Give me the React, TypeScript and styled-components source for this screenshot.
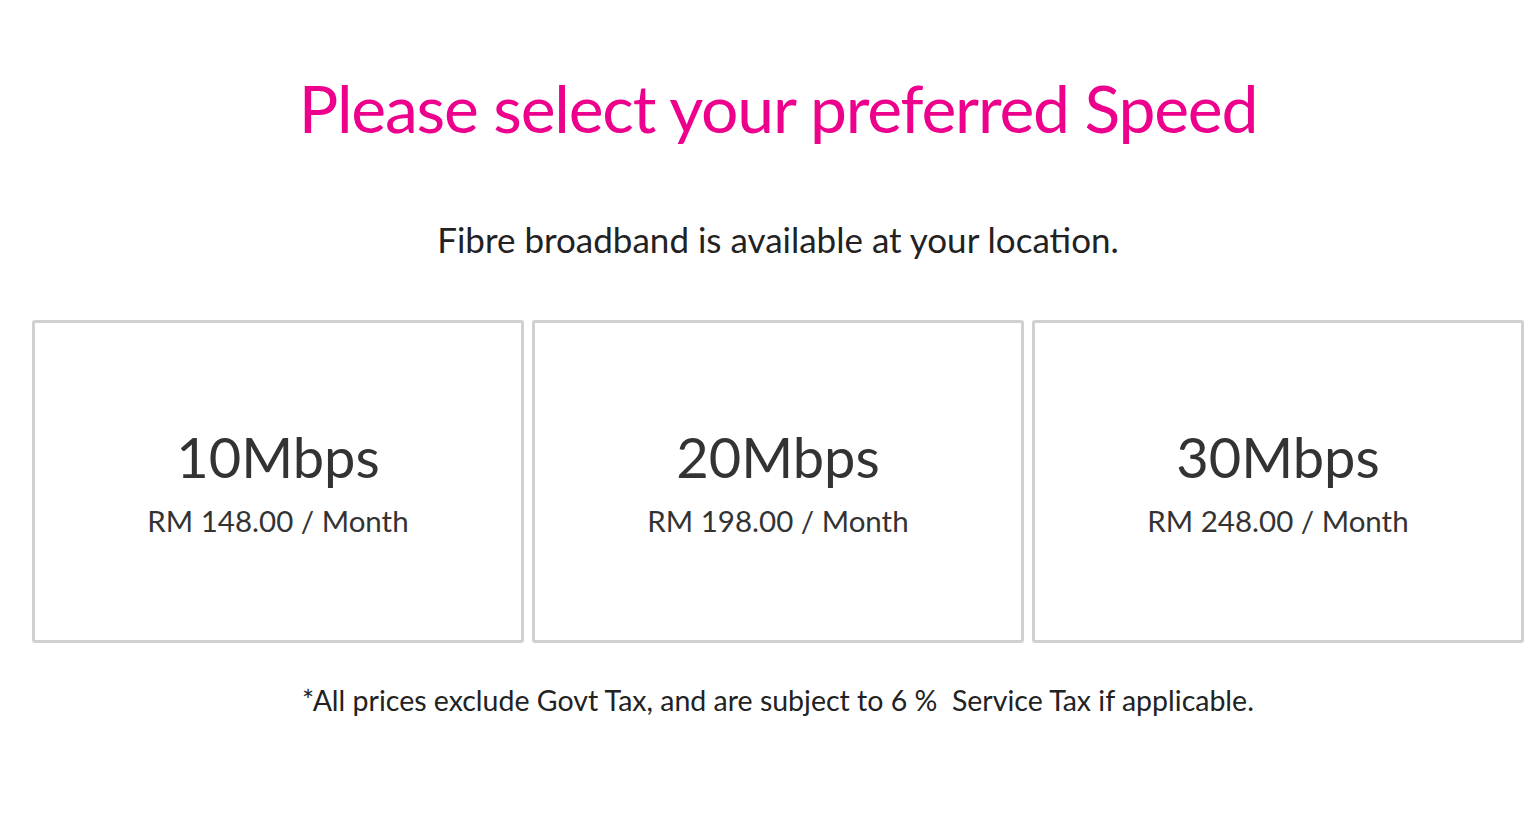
import React from "react";
import styled, { createGlobalStyle } from "styled-components";

const GlobalStyle = createGlobalStyle`
    html, body {
        margin: 0;
        padding: 0;
        background: #ffffff;
    }
    body {
        font-family: "Lato", "Open Sans", "Liberation Sans", sans-serif;
        color: #222222;
    }
`;

const Page = styled.div`
    display: flex;
    flex-direction: column;
    align-items: center;
    padding: 66px 16px 0 32px;
`;

const Title = styled.h1`
    margin: 0;
    font-size: 66px;
    font-weight: 400;
    line-height: 84px;
    letter-spacing: -1.2px;
    color: #ec008c;
    text-align: center;
`;

const Subtitle = styled.p`
    margin: 69px 0 0;
    font-size: 35px;
    line-height: 40px;
    color: #222222;
    text-align: center;
`;

const PlanGrid = styled.div`
    display: grid;
    grid-template-columns: repeat(3, 1fr);
    gap: 8px;
    width: 100%;
    margin-top: 61px;
`;

const PlanCard = styled.button`
    display: flex;
    flex-direction: column;
    align-items: center;
    justify-content: center;
    height: 323px;
    padding: 0;
    background: #ffffff;
    border: 3px solid #d0d0d0;
    border-radius: 3px;
    font-family: inherit;
    cursor: pointer;
`;

const Speed = styled.span`
    font-size: 56px;
    line-height: 68px;
    color: #333333;
`;

const Price = styled.span`
    margin-top: 10px;
    font-size: 29.5px;
    line-height: 40px;
    color: #333333;
`;

const Note = styled.p`
    margin: 39px 0 0;
    font-size: 28.5px;
    line-height: 36px;
    color: #222222;
    text-align: center;
`;

const plans = [
    { speed: "10Mbps", price: "RM 148.00 / Month" },
    { speed: "20Mbps", price: "RM 198.00 / Month" },
    { speed: "30Mbps", price: "RM 248.00 / Month" },
];

const App: React.FC = () => {
    return (
        <>
            <GlobalStyle />
            <Page>
                <Title>Please select your preferred Speed</Title>
                <Subtitle>Fibre broadband is available at your location.</Subtitle>
                <PlanGrid>
                    {plans.map((plan) => (
                        <PlanCard key={plan.speed} type="button">
                            <Speed>{plan.speed}</Speed>
                            <Price>{plan.price}</Price>
                        </PlanCard>
                    ))}
                </PlanGrid>
                <Note>*All prices exclude Govt Tax, and are subject to 6 %&nbsp; Service Tax if applicable.</Note>
            </Page>
        </>
    );
};

export default App;
